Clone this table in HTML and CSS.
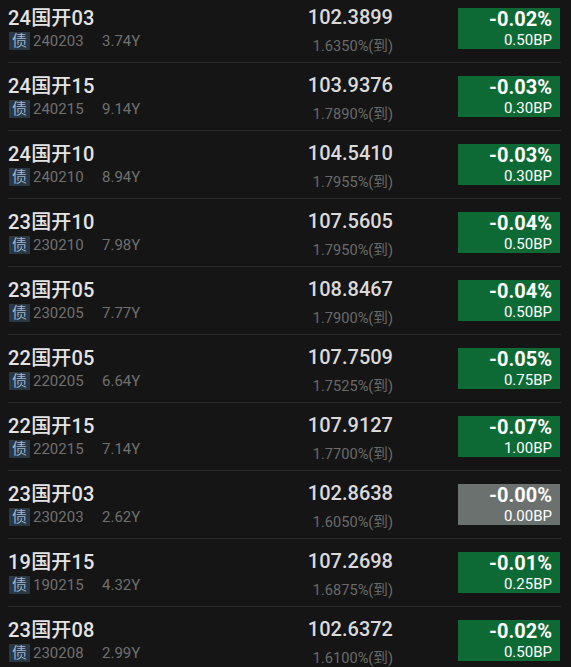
FILE: index.html
```html
<!DOCTYPE html>
<html lang="zh-CN">
<head>
<meta charset="utf-8">
<link rel="stylesheet" href="styles.css">
</head>
<body>
<div class="list">
  <div class="row">
    <div class="left"><div class="name">24国开03</div><div class="sub"><span class="tag">债</span><span class="code">240203</span><span class="term">3.74Y</span></div></div>
    <div class="mid"><div class="price">102.3899</div><div class="yield">1.6350%(到)</div></div>
    <div class="chg down"><div class="pct">-0.02%</div><div class="bp">0.50BP</div></div>
  </div>
  <div class="row">
    <div class="left"><div class="name">24国开15</div><div class="sub"><span class="tag">债</span><span class="code">240215</span><span class="term">9.14Y</span></div></div>
    <div class="mid"><div class="price">103.9376</div><div class="yield">1.7890%(到)</div></div>
    <div class="chg down"><div class="pct">-0.03%</div><div class="bp">0.30BP</div></div>
  </div>
  <div class="row">
    <div class="left"><div class="name">24国开10</div><div class="sub"><span class="tag">债</span><span class="code">240210</span><span class="term">8.94Y</span></div></div>
    <div class="mid"><div class="price">104.5410</div><div class="yield">1.7955%(到)</div></div>
    <div class="chg down"><div class="pct">-0.03%</div><div class="bp">0.30BP</div></div>
  </div>
  <div class="row">
    <div class="left"><div class="name">23国开10</div><div class="sub"><span class="tag">债</span><span class="code">230210</span><span class="term">7.98Y</span></div></div>
    <div class="mid"><div class="price">107.5605</div><div class="yield">1.7950%(到)</div></div>
    <div class="chg down"><div class="pct">-0.04%</div><div class="bp">0.50BP</div></div>
  </div>
  <div class="row">
    <div class="left"><div class="name">23国开05</div><div class="sub"><span class="tag">债</span><span class="code">230205</span><span class="term">7.77Y</span></div></div>
    <div class="mid"><div class="price">108.8467</div><div class="yield">1.7900%(到)</div></div>
    <div class="chg down"><div class="pct">-0.04%</div><div class="bp">0.50BP</div></div>
  </div>
  <div class="row">
    <div class="left"><div class="name">22国开05</div><div class="sub"><span class="tag">债</span><span class="code">220205</span><span class="term">6.64Y</span></div></div>
    <div class="mid"><div class="price">107.7509</div><div class="yield">1.7525%(到)</div></div>
    <div class="chg down"><div class="pct">-0.05%</div><div class="bp">0.75BP</div></div>
  </div>
  <div class="row">
    <div class="left"><div class="name">22国开15</div><div class="sub"><span class="tag">债</span><span class="code">220215</span><span class="term">7.14Y</span></div></div>
    <div class="mid"><div class="price">107.9127</div><div class="yield">1.7700%(到)</div></div>
    <div class="chg down"><div class="pct">-0.07%</div><div class="bp">1.00BP</div></div>
  </div>
  <div class="row">
    <div class="left"><div class="name">23国开03</div><div class="sub"><span class="tag">债</span><span class="code">230203</span><span class="term">2.62Y</span></div></div>
    <div class="mid"><div class="price">102.8638</div><div class="yield">1.6050%(到)</div></div>
    <div class="chg flat"><div class="pct">-0.00%</div><div class="bp">0.00BP</div></div>
  </div>
  <div class="row">
    <div class="left"><div class="name">19国开15</div><div class="sub"><span class="tag">债</span><span class="code">190215</span><span class="term">4.32Y</span></div></div>
    <div class="mid"><div class="price">107.2698</div><div class="yield">1.6875%(到)</div></div>
    <div class="chg down"><div class="pct">-0.01%</div><div class="bp">0.25BP</div></div>
  </div>
  <div class="row">
    <div class="left"><div class="name">23国开08</div><div class="sub"><span class="tag">债</span><span class="code">230208</span><span class="term">2.99Y</span></div></div>
    <div class="mid"><div class="price">102.6372</div><div class="yield">1.6100%(到)</div></div>
    <div class="chg down"><div class="pct">-0.02%</div><div class="bp">0.50BP</div></div>
  </div>
</div>
</body>
</html>
```
FILE: styles.css
```css
html, body {
  margin: 0;
  padding: 0;
  background: #151515;
  height: 100%;
  overflow: hidden;
}
body {
  font-family: Roboto, "Noto Sans CJK SC", sans-serif;
  color: #e2e2e2;
}
.list {
  margin-top: -5px;
  padding: 0 10px 0 8px;
}
.row {
  display: grid;
  grid-template-columns: 1fr auto 102px;
  column-gap: 65px;
  height: 67px;
  border-bottom: 1px solid #2b2b2b;
  padding-right: 1px;
}
.left {
  padding-top: 12px;
}
.name {
  font-size: 20px;
  line-height: 22px;
  font-weight: 500;
  color: #e4e4e4;
  letter-spacing: 0.2px;
}
.sub {
  display: flex;
  align-items: center;
  margin-top: 3px;
  height: 18px;
  font-size: 15px;
  color: #707070;
}
.tag {
  display: inline-block;
  width: 21px;
  height: 18px;
  line-height: 18px;
  text-align: center;
  background: #2a3744;
  color: #9fb8d0;
  font-size: 15px;
  margin-left: 1px;
  margin-right: 3px;
}
.code {
  min-width: 69px;
}
.mid {
  text-align: right;
  padding-top: 11px;
}
.price {
  font-size: 20px;
  line-height: 22px;
  font-weight: 500;
  color: #dadada;
}
.yield {
  margin-top: 9px;
  font-size: 14.6px;
  line-height: 18px;
  color: #6a6a6a;
}
.chg {
  margin-top: 13px;
  height: 41px;
  box-sizing: border-box;
  padding-right: 8px;
  text-align: right;
  color: #fff;
}
.chg.down {
  background: #0e6a35;
}
.chg.flat {
  background: #6b716e;
}
.pct {
  font-size: 20px;
  line-height: 22px;
  font-weight: 700;
}
.bp {
  font-size: 15px;
  line-height: 18px;
  margin-top: 1px;
}
```
